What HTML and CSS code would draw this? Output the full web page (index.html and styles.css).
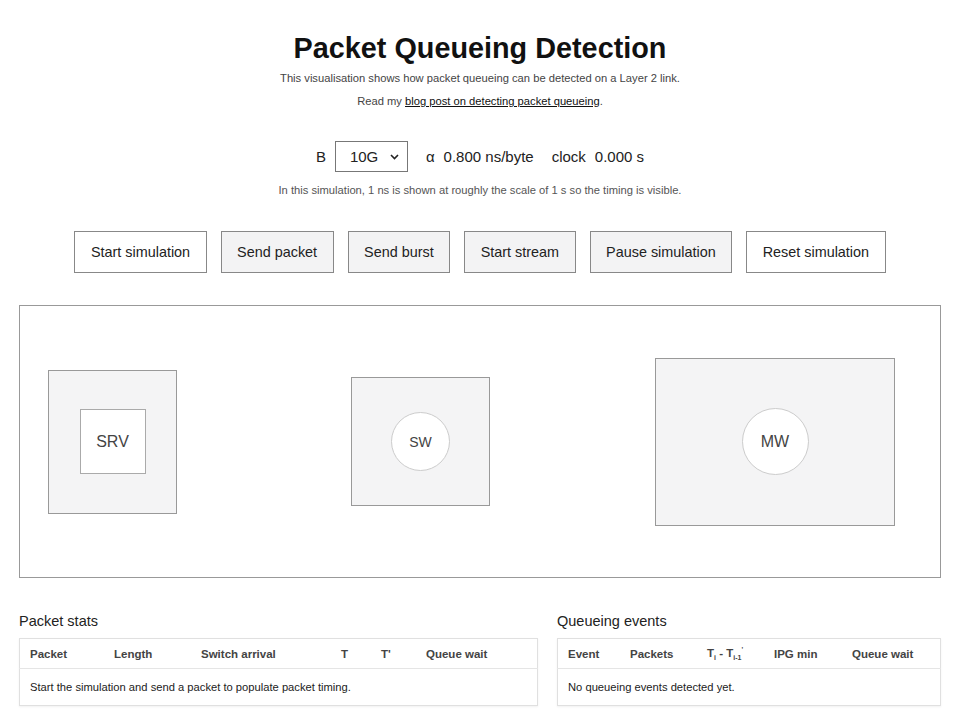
FILE: index.html
```html
<!DOCTYPE html>
<html lang="en">
<head>
  <meta charset="UTF-8" />
  <meta name="viewport" content="width=device-width, initial-scale=1" />
  <title>Packet Queueing Detection</title>
  <link rel="stylesheet" href="styles.css">
</head>
<body>
  <div class="wrapper">
    <h1>Packet Queueing Detection</h1>
    <p class="intro">This visualisation shows how packet queueing can be detected on a Layer 2 link.</p>
    <p class="intro">Read my <a href="#">blog post on detecting packet queueing</a>.</p>

    <div class="controls">
      <div class="ctl">
        <span>B</span>
        <div class="select-wrap">
          <select id="bandwidth">
            <option>1G</option>
            <option selected>10G</option>
            <option>25G</option>
            <option>100G</option>
          </select>
          <svg class="chevron" width="9" height="6" viewBox="0 0 9 6"><path d="M1 1l3.5 3.5L8 1" fill="none" stroke="#222" stroke-width="1.6"/></svg>
        </div>
      </div>
      <div class="ctl"><span>α</span><span id="alpha">0.800 ns/byte</span></div>
      <div class="ctl"><span>clock</span><span id="clock">0.000 s</span></div>
    </div>
    <p class="note">In this simulation, 1 ns is shown at roughly the scale of 1 s so the timing is visible.</p>

    <div class="actions">
      <button class="btn">Start simulation</button>
      <button class="btn" disabled>Send packet</button>
      <button class="btn" disabled>Send burst</button>
      <button class="btn" disabled>Start stream</button>
      <button class="btn" disabled>Pause simulation</button>
      <button class="btn">Reset simulation</button>
    </div>

    <div class="stage">
      <div class="node node-srv">
        <div class="srv-core">SRV</div>
      </div>
      <div class="node node-sw">
        <div class="port port-sw">SW</div>
      </div>
      <div class="node node-mw">
        <div class="port port-mw">MW</div>
      </div>
    </div>

    <div class="stats">
      <section>
        <h3>Packet stats</h3>
        <table class="stats-table packets">
          <thead>
            <tr>
              <th class="c1">Packet</th>
              <th class="c2">Length</th>
              <th class="c3">Switch arrival</th>
              <th class="c4">T</th>
              <th class="c5">T'</th>
              <th>Queue wait</th>
            </tr>
          </thead>
          <tbody>
            <tr><td colspan="6">Start the simulation and send a packet to populate packet timing.</td></tr>
          </tbody>
        </table>
      </section>
      <section>
        <h3>Queueing events</h3>
        <table class="stats-table events">
          <thead>
            <tr>
              <th class="c1">Event</th>
              <th class="c2">Packets</th>
              <th class="c3">T<sub>i</sub> - T<sub>i-1</sub><sup>'</sup></th>
              <th class="c4">IPG min</th>
              <th>Queue wait</th>
            </tr>
          </thead>
          <tbody>
            <tr><td colspan="5">No queueing events detected yet.</td></tr>
          </tbody>
        </table>
      </section>
    </div>
  </div>
</body>
</html>
```

FILE: styles.css
```css
body {
  font-family: "Liberation Sans", Arial, sans-serif;
  background: #fff;
  color: #222;
  margin: 0;
}
.wrapper {
  padding: 30px 19px 20px;
}
h1 {
  margin: 0 0 1px;
  font-size: 28.8px;
  line-height: 36px;
  text-align: center;
  color: #111;
}
.intro {
  margin: 0;
  font-size: 11.2px;
  line-height: 23px;
  text-align: center;
  color: #444;
}
.intro a {
  color: #111;
}
.controls {
  display: flex;
  justify-content: center;
  align-items: center;
  gap: 18px;
  margin-top: 28px;
  font-size: 15px;
}
.ctl {
  display: flex;
  align-items: center;
  gap: 9px;
}
.select-wrap {
  position: relative;
}
.select-wrap select {
  appearance: none;
  -webkit-appearance: none;
  width: 73px;
  height: 31px;
  padding: 0 0 0 14px;
  font-family: inherit;
  font-size: 15px;
  color: #222;
  background: #fff;
  border: 1px solid #777;
  border-radius: 0;
}
.chevron {
  position: absolute;
  right: 9px;
  top: 13px;
  pointer-events: none;
}
.note {
  margin: 10px 0 0;
  font-size: 11.2px;
  line-height: 16px;
  text-align: center;
  color: #555;
}
.actions {
  display: flex;
  justify-content: center;
  gap: 14px;
  margin-top: 33px;
}
.btn {
  height: 42px;
  padding: 0 15.5px;
  font-family: inherit;
  font-size: 14.4px;
  color: #222;
  background: #fff;
  border: 1px solid #888;
  border-radius: 0;
  cursor: pointer;
}
.btn:disabled {
  background: #f3f3f4;
  color: #222;
  cursor: default;
}
.stage {
  display: flex;
  align-items: center;
  height: 273px;
  margin-top: 32px;
  border: 1px solid #999;
  box-sizing: border-box;
}
.node {
  display: flex;
  align-items: center;
  justify-content: center;
  box-sizing: border-box;
  background: #f4f4f5;
  border: 1px solid #999;
}
.node-srv {
  width: 129px;
  height: 144px;
  margin-left: 28px;
}
.srv-core {
  display: flex;
  align-items: center;
  justify-content: center;
  width: 66px;
  height: 65px;
  box-sizing: border-box;
  background: #fff;
  border: 1px solid #aaa;
  font-size: 16px;
  color: #444;
}
.node-sw {
  width: 139px;
  height: 129px;
  margin-left: 174px;
}
.node-mw {
  width: 240px;
  height: 168px;
  margin-left: 165px;
}
.port {
  display: flex;
  align-items: center;
  justify-content: center;
  box-sizing: border-box;
  background: #fff;
  border: 1px solid #ccc;
  border-radius: 50%;
  color: #444;
}
.port-sw {
  width: 59px;
  height: 59px;
  font-size: 14px;
}
.port-mw {
  width: 67px;
  height: 67px;
  font-size: 16px;
}
.stats {
  display: grid;
  grid-template-columns: 519px 1fr;
  gap: 19px;
  margin-top: 34px;
}
.stats h3 {
  margin: 0 0 8px;
  font-size: 14.5px;
  font-weight: normal;
  line-height: 18px;
  color: #222;
}
.stats-table {
  width: 100%;
  border-collapse: collapse;
  table-layout: fixed;
  border: 1px solid #e0e0e0;
  box-shadow: 0 1px 2px rgba(0, 0, 0, 0.06);
  font-size: 11.2px;
}
.stats-table th {
  height: 29px;
  padding: 0 0 0 10px;
  text-align: left;
  font-size: 11.5px;
  color: #444;
  white-space: nowrap;
  border-bottom: 1px solid #e5e5e5;
}
.stats-table td {
  height: 36px;
  padding: 0 0 0 10px;
  color: #222;
}
.stats-table sub,
.stats-table sup {
  font-size: 7px;
}
.packets .c1 { width: 74px; }
.packets .c2 { width: 77px; }
.packets .c3 { width: 130px; }
.packets .c4 { width: 30px; }
.packets .c5 { width: 35px; }
.events .c1 { width: 52px; }
.events .c2 { width: 67px; }
.events .c3 { width: 57px; }
.events .c4 { width: 68px; }
```
